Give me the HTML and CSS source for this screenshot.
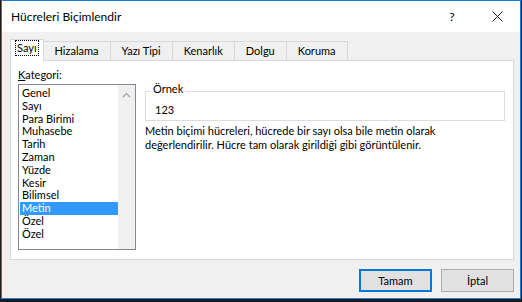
FILE: index.html
```html
<html>
<head>
	<meta charset="utf-8">
	<title>Hücreleri Biçimlendir</title>
	<link rel="stylesheet" href="styles.css">
</head>
<body>
	<div class="window">
		<div class="titlebar">
			<span class="title">Hücreleri Biçimlendir</span>
			<span class="help">?</span>
			<span class="close">
				<svg width="11" height="11" viewBox="0 0 11 11"><path d="M0.5 0.5 L10.5 10.5 M10.5 0.5 L0.5 10.5" stroke="#222" stroke-width="1" fill="none"/></svg>
			</span>
		</div>
		<div class="content">
			<div class="tabs">
				<div class="tab selected"><span class="focus">Sayı</span></div>
				<div class="tab">Hizalama</div>
				<div class="tab">Yazı Tipi</div>
				<div class="tab">Kenarlık</div>
				<div class="tab">Dolgu</div>
				<div class="tab">Koruma</div>
			</div>
			<div class="panel">
				<div class="left">
					<div class="label"><u>K</u>ategori:</div>
					<div class="listbox">
						<ul class="items">
							<li>Genel</li>
							<li>Sayı</li>
							<li>Para Birimi</li>
							<li>Muhasebe</li>
							<li>Tarih</li>
							<li>Zaman</li>
							<li>Yüzde</li>
							<li>Kesir</li>
							<li>Bilimsel</li>
							<li class="active">Metin</li>
							<li>Özel</li>
							<li>Özel</li>
						</ul>
						<div class="scroll">
							<svg width="9" height="6" viewBox="0 0 9 6"><path d="M1 5 L4.5 1.5 L8 5" stroke="#a3a3a3" stroke-width="1.2" fill="none"/></svg>
						</div>
					</div>
				</div>
				<div class="right">
					<div class="sample">
						<div class="caption">Örnek</div>
						<div class="value">123</div>
					</div>
					<p class="desc">Metin biçimi hücreleri, hücrede bir sayı olsa bile metin olarak değerlendirilir. Hücre tam olarak girildiği gibi görüntülenir.</p>
				</div>
			</div>
			<div class="buttons">
				<button class="default">Tamam</button>
				<button>İptal</button>
			</div>
		</div>
	</div>
</body>
</html>
```

FILE: styles.css
```css
html, body{
	margin:0;
	background:#1b1b1b;
}
body{
	padding:0 1px 3px 1px;
	font-family:Lato, "Noto Sans", sans-serif;
	font-size:11px;
	color:#000;
}
.window{
	border:1px solid #1a7fd4;
	height:297px;
	display:flex;
	flex-direction:column;
	background:#f0f0f0;
}
/* title bar */
.titlebar{
	height:31px;
	background:#fff;
	display:flex;
	align-items:center;
	padding-left:9px;
}
.title{
	font-size:12px;
	flex:1;
}
.help{
	font-size:12px;
	width:10px;
	text-align:center;
	margin-right:17px;
}
.close{
	width:46px;
	display:flex;
	justify-content:center;
}
/* body */
.content{
	flex:1;
	display:flex;
	flex-direction:column;
	padding:6px 6px 0 8px;
}
.tabs{
	display:flex;
	align-items:flex-end;
	height:22px;
	position:relative;
	z-index:1;
}
.tab{
	height:18px;
	line-height:18px;
	padding:0 11px;
	border:1px solid #d9d9d9;
	border-bottom:none;
	margin-left:-1px;
	background:#f0f0f0;
}
.tab.selected{
	height:21px;
	background:#fff;
	margin-left:0;
	padding:0 4px;
	line-height:20px;
	margin-bottom:-1px;
}
.focus{
	border:1px dotted #000;
	padding:0 1px;
	line-height:14px;
	display:inline-block;
}
.panel{
	height:198px;
	background:#fff;
	border:1px solid #d9d9d9;
	display:flex;
	padding:0 7px;
}
.left{
	width:121px;
}
.label{
	margin-top:7px;
	height:16px;
}
.listbox{
	border:1px solid #828790;
	height:164px;
	display:flex;
}
.items{
	list-style:none;
	margin:2px 0 0 1px;
	padding:0;
	flex:1;
}
.items li{
	height:12.8px;
	line-height:12.8px;
	padding-left:2px;
}
.items li.active{
	background:#3399ff;
	color:#fff;
}
.scroll{
	width:17px;
	background:#f0f0f0;
	display:flex;
	justify-content:center;
	padding-top:7px;
	align-items:flex-start;
}
.right{
	flex:1;
	margin-left:9px;
	margin-right:1px;
}
/* group box */
.sample{
	margin-top:30px;
	border:1px solid #dcdcdc;
	padding:0 0 3px 9px;
}
.caption{
	width:fit-content;
	margin:-9px 0 0 -4px;
	padding:0 2px;
	line-height:12px;
	background:#fff;
}
.value{
	margin-top:8px;
	line-height:14px;
}
.desc{
	margin:3px 0 0 0;
	line-height:14px;
	width:360px;
}
/* buttons */
.buttons{
	display:flex;
	justify-content:flex-end;
	gap:9px;
	padding-top:9px;
}
button{
	width:73px;
	height:23px;
	background:#e1e1e1;
	border:1px solid #adadad;
	font-family:Lato, "Noto Sans", sans-serif;
	font-size:11px;
	padding:0;
}
button.default{
	border:2px solid #0078d7;
}
```
